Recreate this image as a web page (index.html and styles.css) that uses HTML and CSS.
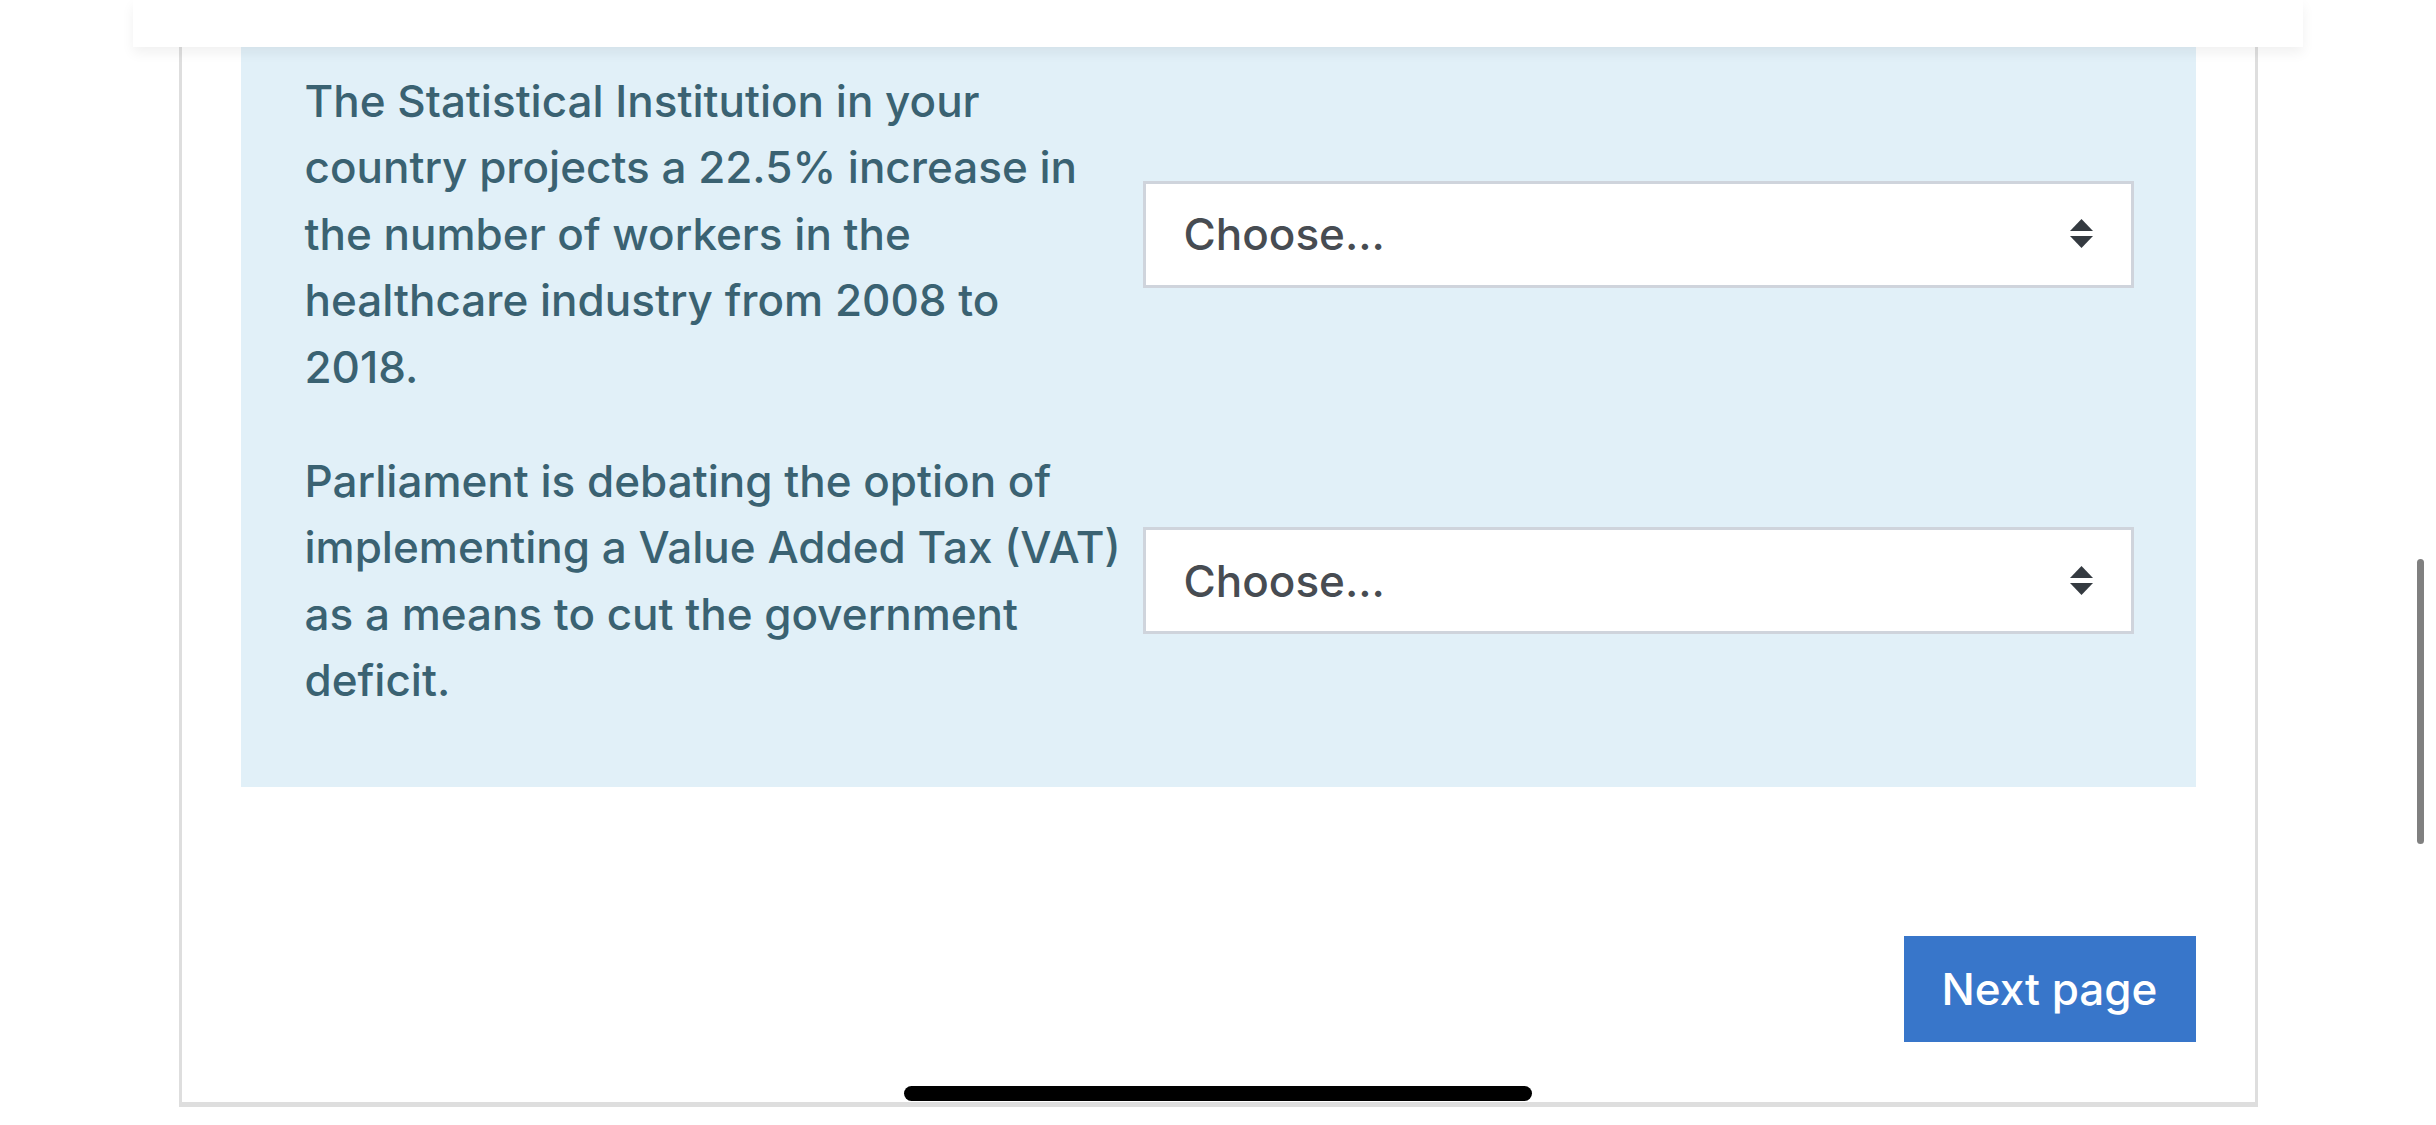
FILE: index.html
```html
<!DOCTYPE html>
<html lang="en">
<head>
<meta charset="utf-8">
<title>Quiz</title>
<link rel="stylesheet" href="styles.css">
</head>
<body>
<header class="topbar"></header>
<main class="card">
  <section class="formulation">
    <div class="match-row">
      <div class="stem">The Statistical Institution in your<br>country projects a 22.5% increase in<br>the number of workers in the<br>healthcare industry from 2008 to<br>2018.</div>
      <div class="select">
        <span class="select-label">Choose...</span>
        <svg class="select-arrows" width="23" height="30" viewBox="0 0 23 30"><polygon points="0,12 11.5,0 23,12" fill="#343a40"/><polygon points="0,17 23,17 11.5,29" fill="#343a40"/></svg>
      </div>
    </div>
    <div class="match-row">
      <div class="stem">Parliament is debating the option of<br>implementing a Value Added Tax (VAT)<br>as a means to cut the government<br>deficit.</div>
      <div class="select">
        <span class="select-label">Choose...</span>
        <svg class="select-arrows" width="23" height="30" viewBox="0 0 23 30"><polygon points="0,12 11.5,0 23,12" fill="#343a40"/><polygon points="0,17 23,17 11.5,29" fill="#343a40"/></svg>
      </div>
    </div>
  </section>
  <div class="actions">
    <button class="btn-next" type="button">Next page</button>
  </div>
</main>
<div class="scrollbar"></div>
<div class="home-indicator"></div>
</body>
</html>
```
FILE: styles.css
```css
html, body {
  margin: 0;
  padding: 0;
  background: #ffffff;
  height: 1125px;
  overflow: hidden;
}
body {
  font-family: Inter, "Noto Sans", sans-serif;
  position: relative;
}
.topbar {
  width: 2170px;
  height: 47px;
  margin: 0 auto;
  background: #ffffff;
  box-shadow: 0 6px 12px rgba(0, 0, 0, 0.06);
  position: relative;
  z-index: 2;
}
.card {
  width: 1955px;
  margin: 0 auto;
  border: 3px solid #dedede;
  border-top: none;
  border-bottom: 5px solid #dedede;
  background: #ffffff;
  padding: 0 59px 60px 59px;
}
.formulation {
  background: #e1f0f8;
  padding: 21px 62px 73px 64px;
  display: flex;
  flex-direction: column;
  gap: 48px;
}
.match-row {
  display: flex;
  align-items: center;
  gap: 14px;
}
.stem {
  width: 824px;
  flex: none;
  white-space: nowrap;
  color: #3a6272;
  font-size: 44px;
  font-weight: 500;
  line-height: 66.4px;
}
.select {
  flex: 1;
  height: 101px;
  border: 3px solid #cfd4dc;
  background: #ffffff;
  display: flex;
  align-items: center;
  justify-content: space-between;
  padding: 0 38px 0 38px;
}
.select-label {
  color: #474c52;
  font-size: 44px;
  font-weight: 500;
}
.select-arrows {
  display: block;
}
.actions {
  display: flex;
  justify-content: flex-end;
  padding-top: 149px;
}
.btn-next {
  width: 292px;
  height: 106px;
  border: none;
  background: #3876ca;
  color: #ffffff;
  font-family: Inter, "Noto Sans", sans-serif;
  font-size: 44px;
  font-weight: 500;
  padding: 0;
}
.scrollbar {
  position: absolute;
  left: 2417px;
  top: 559px;
  width: 7px;
  height: 285px;
  border-radius: 4px;
  background: #808080;
}
.home-indicator {
  position: absolute;
  left: 904px;
  top: 1086px;
  width: 628px;
  height: 15px;
  border-radius: 8px;
  background: #000000;
  z-index: 3;
}
```
